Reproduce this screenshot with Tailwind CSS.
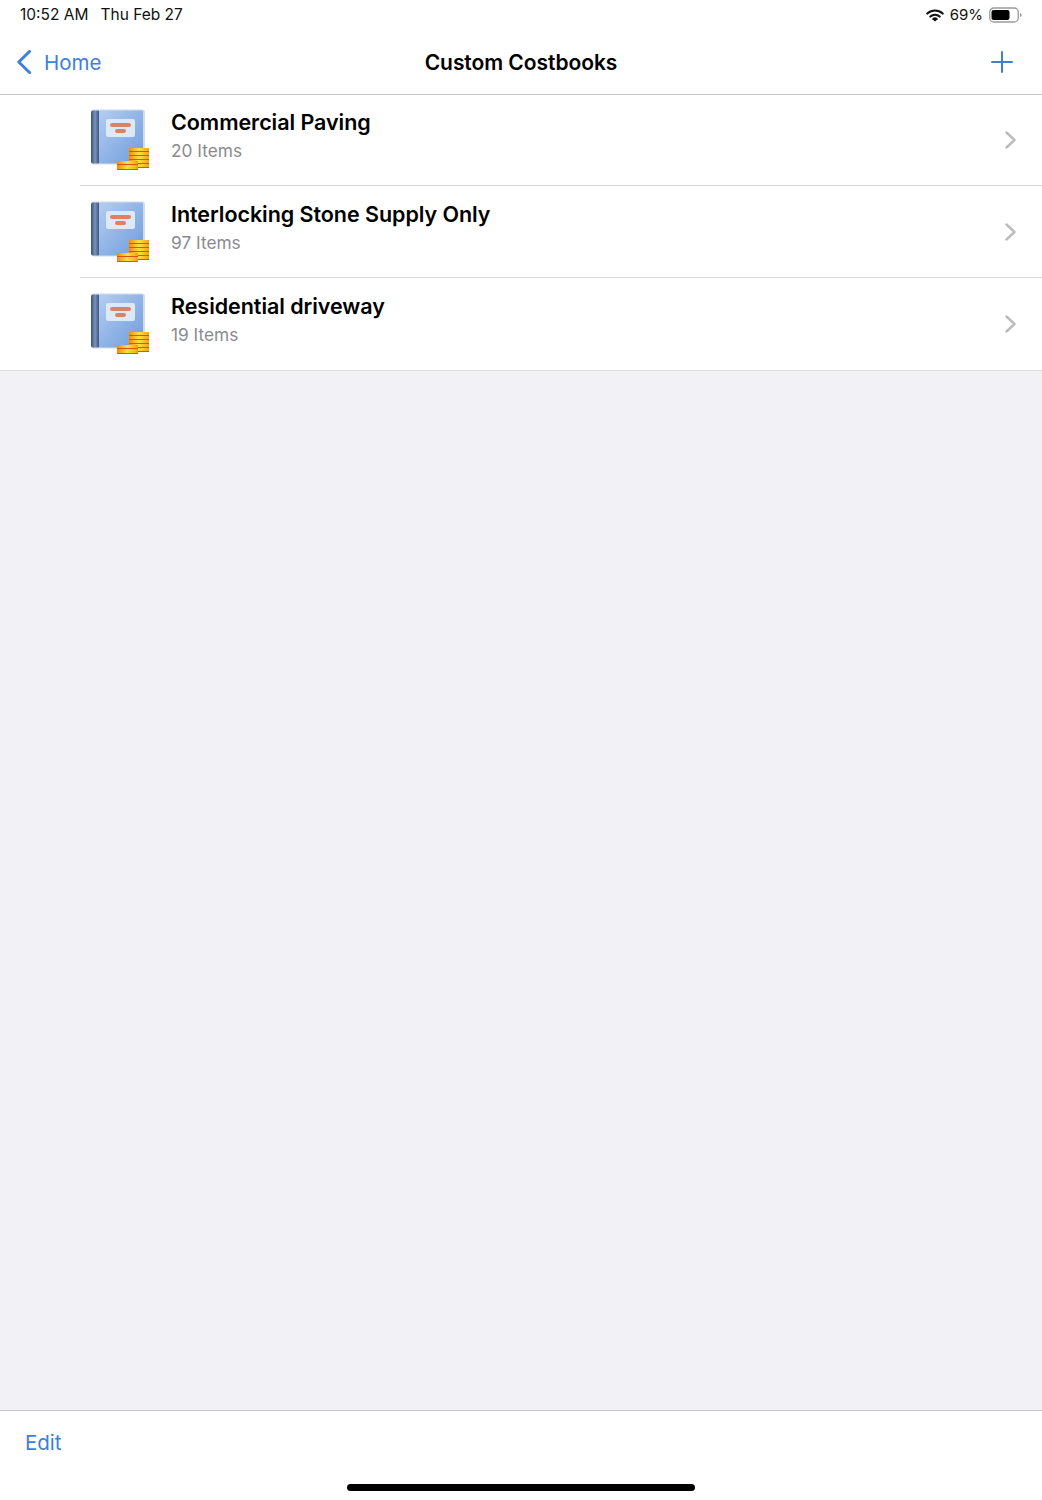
<!DOCTYPE html>
<html>
<head>
<meta charset="utf-8">
<script src="https://cdn.jsdelivr.net/npm/@tailwindcss/browser@4"></script>
</head>
<body class="m-0">
<svg width="0" height="0" class="absolute">
  <defs>
    <linearGradient id="cover" x1="0" y1="0" x2="1" y2="1">
      <stop offset="0" stop-color="#b4cdf0"/>
      <stop offset="1" stop-color="#6f9cdd"/>
    </linearGradient>
    <linearGradient id="spine" x1="0" y1="0" x2="1" y2="0">
      <stop offset="0" stop-color="#34507e"/>
      <stop offset="0.45" stop-color="#7c93b5"/>
      <stop offset="1" stop-color="#2c4676"/>
    </linearGradient>
    <linearGradient id="coin" x1="0" y1="0" x2="1" y2="0">
      <stop offset="0" stop-color="#f28a10"/>
      <stop offset="0.5" stop-color="#ffe040"/>
      <stop offset="1" stop-color="#f6a015"/>
    </linearGradient>
    <symbol id="book" viewBox="0 0 60 62">
      <rect x="1" y="1.500" width="54" height="55" rx="3" fill="#d2dbe8"/>
      <rect x="1" y="2.500" width="9" height="53" rx="2" fill="url(#spine)"/>
      <rect x="9" y="2.500" width="44" height="53" rx="1" fill="url(#cover)"/>
      <rect x="16" y="11" width="29" height="18" rx="2" fill="#dbe9f8"/>
      <rect x="20" y="15" width="21" height="4" rx="2" fill="#e0805f"/>
      <rect x="25" y="21" width="11" height="4" rx="2" fill="#e0805f"/>
      <rect x="39" y="40" width="20" height="20" fill="#d9560a"/>
      <rect x="39" y="40" width="20" height="3" fill="url(#coin)"/>
      <rect x="39" y="44" width="20" height="3" fill="url(#coin)"/>
      <rect x="39" y="48" width="20" height="3" fill="url(#coin)"/>
      <rect x="39" y="52" width="20" height="3" fill="url(#coin)"/>
      <rect x="39" y="56" width="20" height="3" fill="url(#coin)"/>
      <rect x="27" y="53" width="21" height="9" fill="#d9560a"/>
      <rect x="27" y="53" width="21" height="3" fill="url(#coin)"/>
      <rect x="27" y="57" width="21" height="4" fill="url(#coin)"/>
    </symbol>
  </defs>
</svg>
<div class="w-[1042px] h-[1500px] flex flex-col bg-[#f1f1f6] font-['Inter','Liberation_Sans',sans-serif] overflow-hidden">
  <header class="bg-white h-[95px] shrink-0 border-b border-[#c4c4c6] flex flex-col">
    <div class="h-[30px] flex items-center justify-between pl-[20px] pr-[19px] text-[15px] text-[#111]">
      <div class="flex gap-[12px] text-[15.500px]"><span>10:52 AM</span><span>Thu Feb 27</span></div>
      <div class="flex items-center gap-[6px]">
        <svg width="18" height="13" viewBox="0 0 18 13" fill="none" stroke="#111" stroke-width="2.200" stroke-linecap="round"><path d="M1.300 4.500C5.800 .5 12.200 .5 16.700 4.500"/><path d="M4.300 7.500C7 5.200 11 5.200 13.700 7.500"/><circle cx="9" cy="11" r="1.300" fill="#111" stroke="none"/><path d="M7.300 10C8.300 9.200 9.700 9.200 10.700 10"/></svg>
        <span>69%</span>
        <svg width="34" height="16" viewBox="0 0 34 16" fill="none"><rect x=".75" y="1" width="28.500" height="14" rx="4" stroke="#9a9a9a" stroke-width="1.300"/><rect x="2.500" y="3" width="18" height="10" rx="2" fill="#000"/><path d="M31 6v4c1-.3 1.600-1 1.600-2S32 6.300 31 6z" fill="#9a9a9a"/></svg>
      </div>
    </div>
    <div class="flex-1 flex items-center justify-between relative pl-[17px] pr-[29px]">
      <div class="flex items-center gap-[13px] text-[#3f7fd9] text-[20.500px]">
        <svg width="14" height="24" viewBox="0 0 14 24" fill="none" stroke="#3f7fd9" stroke-width="3" stroke-linecap="round" stroke-linejoin="round"><path d="M12.500 1.500 1.800 12l10.700 10.500"/></svg>
        <span class="mt-[2px]">Home</span>
      </div>
      <h1 class="absolute left-0 right-0 mt-[2px] text-center text-[21px] tracking-[-0.05px] font-semibold text-black">Custom Costbooks</h1>
      <svg width="22" height="22" viewBox="0 0 22 22" stroke="#3f7fd9" stroke-width="2" stroke-linecap="round"><path d="M11 1v20M1 11h20"/></svg>
    </div>
  </header>

  <main class="bg-white border-b border-[#dcdcdf]">
    <div class="h-[91px] pl-[80px] flex">
      <div class="flex-1 flex items-center border-b border-[#d8d8da]">
        <svg width="60" height="62" class="ml-[10px] mt-[-2px] blur-[0.4px]"><use href="#book"/></svg>
        <div class="ml-[21px] flex-1 mt-[-10px]">
          <div class="text-[21.500px] tracking-[-0.05px] font-semibold leading-[28px] text-black">Commercial Paving</div>
          <div class="text-[17.300px] leading-[24px] mt-[3px] text-[#8a8a8e]">20 Items</div>
        </div>
        <svg class="mr-[26px]" width="11" height="18" viewBox="0 0 11 18" fill="none" stroke="#bcbcc0" stroke-width="2.400" stroke-linecap="round" stroke-linejoin="round"><path d="M1.500 1.500 9.500 9l-8 7.500"/></svg>
      </div>
    </div>
    <div class="h-[92px] pl-[80px] flex">
      <div class="flex-1 flex items-center border-b border-[#d8d8da]">
        <svg width="60" height="62" class="ml-[10px] mt-[-1px] blur-[0.4px]"><use href="#book"/></svg>
        <div class="ml-[21px] flex-1 mt-[-8px]">
          <div class="text-[21.500px] tracking-[-0.05px] font-semibold leading-[28px] text-black">Interlocking Stone Supply Only</div>
          <div class="text-[17.300px] leading-[24px] mt-[3px] text-[#8a8a8e]">97 Items</div>
        </div>
        <svg class="mr-[26px]" width="11" height="18" viewBox="0 0 11 18" fill="none" stroke="#bcbcc0" stroke-width="2.400" stroke-linecap="round" stroke-linejoin="round"><path d="M1.500 1.500 9.500 9l-8 7.500"/></svg>
      </div>
    </div>
    <div class="h-[92px] pl-[80px] flex">
      <div class="flex-1 flex items-center">
        <svg width="60" height="62" class="ml-[10px] mt-[-2px] blur-[0.4px]"><use href="#book"/></svg>
        <div class="ml-[21px] flex-1 mt-[-10px]">
          <div class="text-[21.500px] tracking-[-0.05px] font-semibold leading-[28px] text-black">Residential driveway</div>
          <div class="text-[17.300px] leading-[24px] mt-[3px] text-[#8a8a8e]">19 Items</div>
        </div>
        <svg class="mr-[26px]" width="11" height="18" viewBox="0 0 11 18" fill="none" stroke="#bcbcc0" stroke-width="2.400" stroke-linecap="round" stroke-linejoin="round"><path d="M1.500 1.500 9.500 9l-8 7.500"/></svg>
      </div>
    </div>
  </main>

  <div class="flex-1"></div>

  <footer class="h-[90px] shrink-0 bg-white border-t border-[#c8c8cb] relative">
    <div class="pl-[25px] pt-[18px] text-[20.500px] leading-[28px] text-[#3f7fd9]">Edit</div>
    <div class="absolute left-[347px] bottom-[9px] w-[348px] h-[7px] rounded-full bg-black"></div>
  </footer>
</div>
</body>
</html>
